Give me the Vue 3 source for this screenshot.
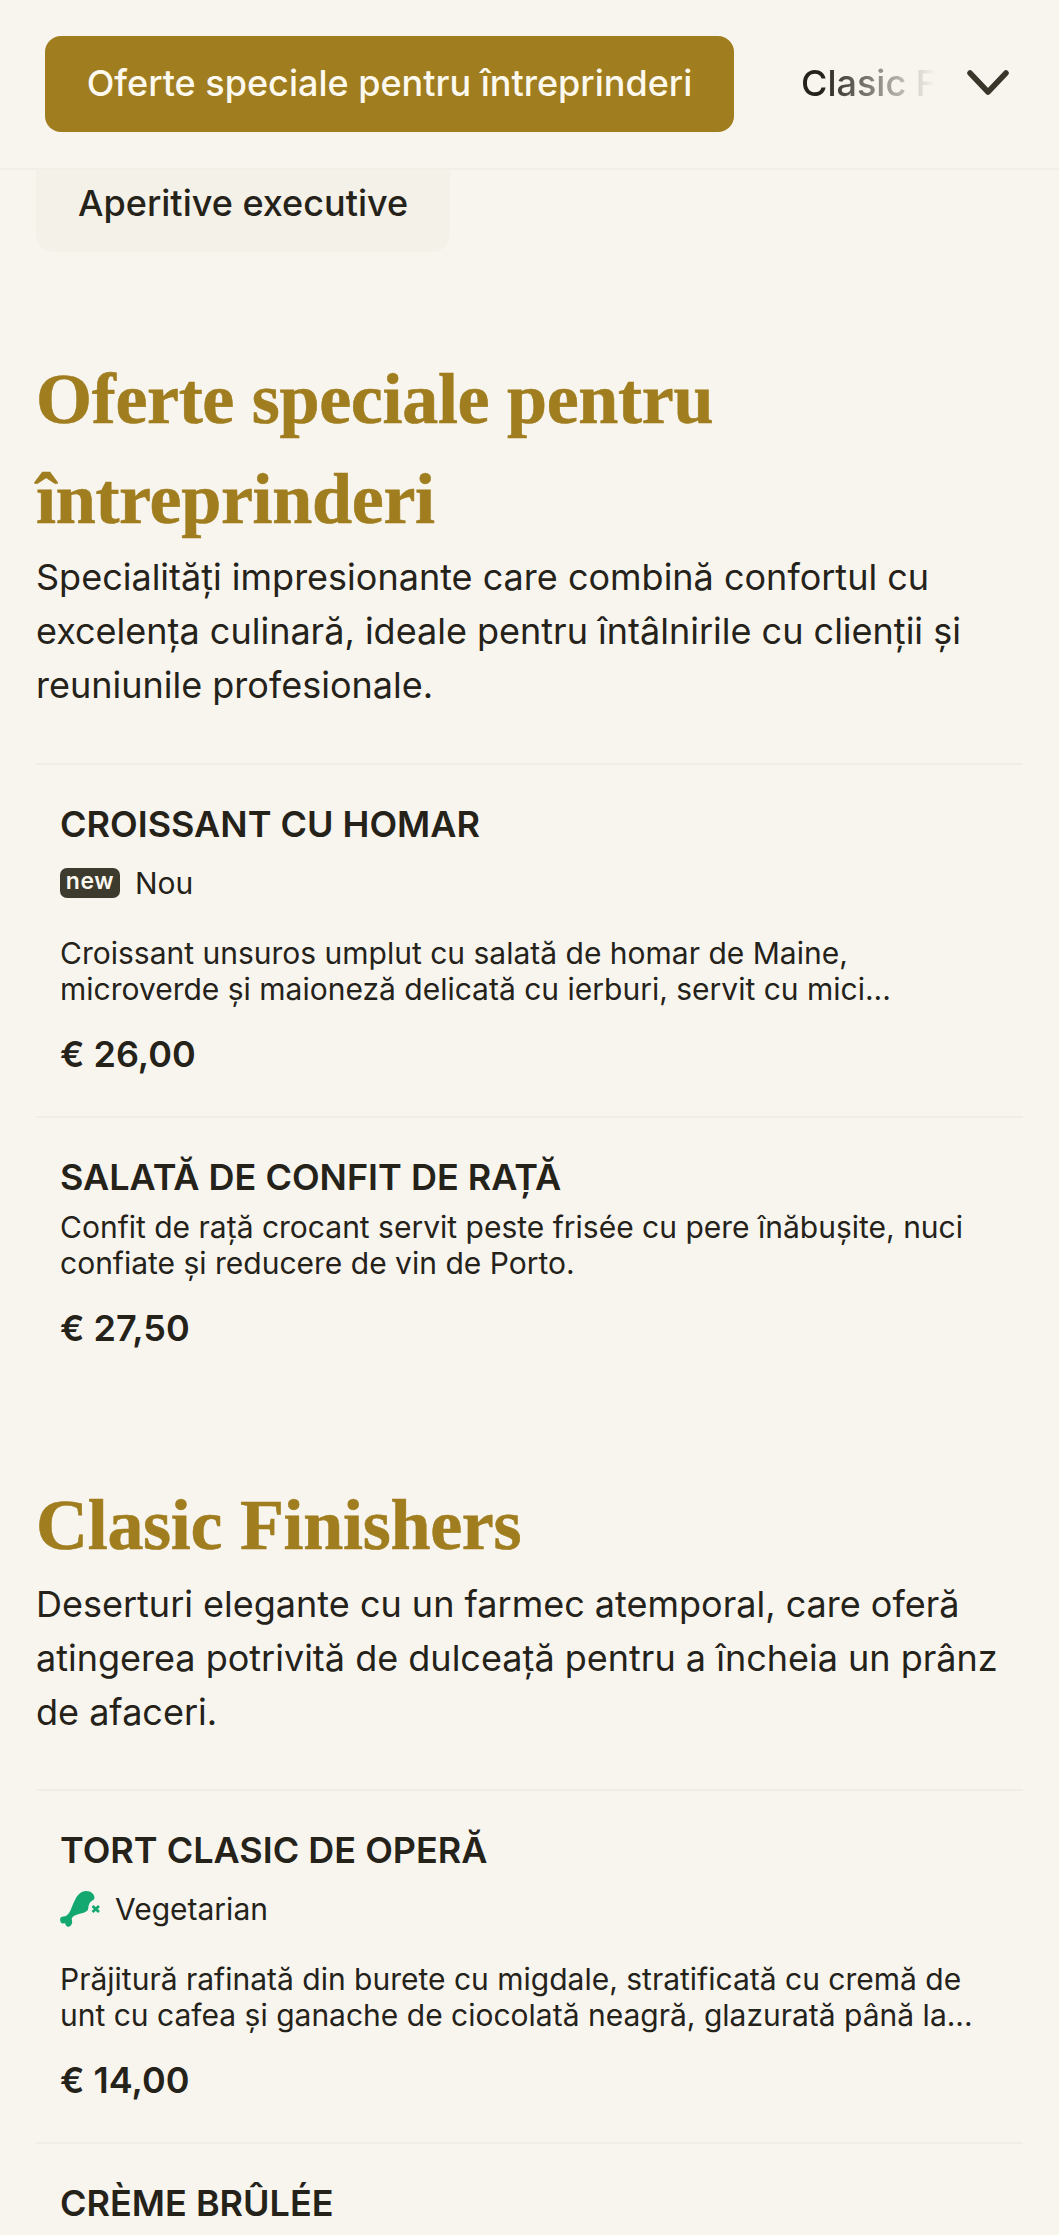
<script setup>
const sections = [
  {
    title: 'Oferte speciale pentru întreprinderi',
    desc: 'Specialități impresionante care combină confortul cu excelența culinară, ideale pentru întâlnirile cu clienții și reuniunile profesionale.',
    items: [
      { name: 'CROISSANT CU HOMAR', tag: 'new', desc: 'Croissant unsuros umplut cu salată de homar de Maine, microverde și maioneză delicată cu ierburi, servit cu mici...', price: '€ 26,00' },
      { name: 'SALATĂ DE CONFIT DE RAȚĂ', desc: 'Confit de rață crocant servit peste frisée cu pere înăbușite, nuci confiate și reducere de vin de Porto.', price: '€ 27,50' }
    ]
  },
  {
    title: 'Clasic Finishers',
    desc: 'Deserturi elegante cu un farmec atemporal, care oferă atingerea potrivită de dulceață pentru a încheia un prânz de afaceri.',
    items: [
      { name: 'TORT CLASIC DE OPERĂ', tag: 'veg', desc: 'Prăjitură rafinată din burete cu migdale, stratificată cu cremă de unt cu cafea și ganache de ciocolată neagră, glazurată până la...', price: '€ 14,00' },
      { name: 'CRÈME BRÛLÉE' }
    ]
  }
]
</script>

<template>
  <div class="page">
    <header class="topbar">
      <button class="tab-active">Oferte speciale pentru întreprinderi</button>
      <span class="tab-next">Clasic Finishers</span>
      <svg class="chevron" viewBox="0 0 44 28" width="44" height="28" aria-hidden="true">
        <path d="M4 4 L22 23 L40 4" fill="none" stroke="#3a362a" stroke-width="5.500" stroke-linecap="round" stroke-linejoin="round" />
      </svg>
    </header>

    <div class="pill-row">
      <span class="pill">Aperitive executive</span>
    </div>

    <section v-for="s in sections" :key="s.title" class="section">
      <h2 class="section-title">{{ s.title }}</h2>
      <p class="section-desc">{{ s.desc }}</p>
      <article v-for="it in s.items" :key="it.name" class="item">
        <h3 class="item-name">{{ it.name }}</h3>
        <div v-if="it.tag === 'new'" class="tag">
          <span class="badge">new</span>
          <span>Nou</span>
        </div>
        <div v-if="it.tag === 'veg'" class="tag">
          <svg class="veg" viewBox="0 0 44 36" width="44" height="36" aria-hidden="true">
            <path fill="#12a870" d="M26 0 C29 0 31 0.800 32 2 C34 3.500 34.800 6 34.300 7.500 C34 9 32 9.800 30.700 10.700 C29.500 12 28.800 14 28.300 15.700 C28.500 17.500 28 19 27 20 C25 21.300 23.500 21.800 21.700 22.300 C19 23 17 23.500 15.500 24.300 C13 25.300 11.800 26.500 11.700 28 C11.800 29.500 12.500 30.500 12 32.300 C11.500 34.500 9.500 36.300 7.500 35.700 C6 35.300 5.600 33.500 5 32.300 C3.500 32.500 1.800 32.800 0.900 31.500 C-0.200 29.800 -0.100 27.300 0.900 26.300 C2.500 25.300 4.500 25.700 6 25 C8 23.500 9.500 21.500 10.700 19 C12 16 13.200 12 15 9 C16.500 6 18 3.800 20 2.300 C22 0.800 24 0 26 0 Z" />
            <path d="M32.500 15 L39 21 M39 15 L32.500 21" stroke="#12a870" stroke-width="2.800" fill="none" />
          </svg>
          <span>Vegetarian</span>
        </div>
        <p v-if="it.desc" class="item-desc" :class="{ tagged: it.tag }">{{ it.desc }}</p>
        <div v-if="it.price" class="price">{{ it.price }}</div>
      </article>
    </section>
  </div>
</template>

<style>
html, body { margin: 0; background: #f8f5ef; }
</style>

<style scoped>
.page {
  width: 1059px;
  height: 2235px;
  overflow: hidden;
  background: #f8f5ef;
  color: #25221a;
  font-family: Inter, "Liberation Sans", sans-serif;
}
.topbar {
  display: flex;
  align-items: center;
  height: 170px;
  padding: 0 0 0 45px;
  box-sizing: border-box;
  border-bottom: 2px solid #f2efe8;
  background: #f8f5ef;
}
.tab-active {
  flex: none;
  width: 689px;
  height: 96px;
  border: 0;
  border-radius: 16px;
  background: #a07d1e;
  color: #fdf9ee;
  font: 500 36px/40px Inter, sans-serif;
  padding: 0 0 3px;
}
.tab-next {
  flex: none;
  width: 134px;
  margin-left: 67px;
  padding-bottom: 2px;
  font-size: 36px;
  font-weight: 500;
  white-space: nowrap;
  overflow: hidden;
  color: #25221a;
  -webkit-mask-image: linear-gradient(to right, #000 15%, transparent 100%);
  mask-image: linear-gradient(to right, #000 15%, transparent 100%);
}
.chevron { flex: none; margin-left: 31px; margin-bottom: 2px; }
.pill-row { padding: 0 36px; height: 82px; }
.pill {
  display: block;
  box-sizing: border-box;
  width: 414px;
  height: 82px;
  padding: 11px 0 0 42px;
  background: #f3f1e8;
  border-radius: 0 0 18px 18px;
  font-size: 36px;
  line-height: 44px;
  font-weight: 500;
}
.section { padding: 0 36px; }
.section + .section { margin-top: 85px; }
.pill-row + .section { margin-top: 97px; }
.section-title {
  margin: 0;
  font: 700 72px/100px "Liberation Serif", serif;
  letter-spacing: -0.3px;
  -webkit-text-stroke: 0.6px #a07d1e;
  color: #a07d1e;
}
.section-desc {
  margin: 1px 0 51px;
  font-size: 36px;
  line-height: 54px;
}
.section + .section .section-desc { margin: 2px 0 50px; }
.item {
  border-top: 2px solid #f0ede5;
  padding: 32px 24px 38px;
}
.item-name {
  margin: 0;
  font-size: 36px;
  line-height: 54px;
  font-weight: 600;
}
.tag {
  display: flex;
  align-items: center;
  gap: 15px;
  height: 32px;
  margin-top: 16px;
  font-size: 30px;
}
.badge {
  width: 60px;
  height: 30px;
  border-radius: 7px;
  background: #3d3a2e;
  color: #fbf8f0;
  font-size: 23px;
  line-height: 27px;
  letter-spacing: 0.6px;
  font-weight: 600;
  text-align: center;
}
.veg { margin-right: -4px; }
.item-desc {
  margin: 5px 0 0;
  font-size: 30px;
  line-height: 36px;
}
.item-desc.tagged { margin-top: 36px; }
.price {
  margin-top: 23px;
  font-size: 36px;
  line-height: 48px;
  font-weight: 600;
}
</style>
